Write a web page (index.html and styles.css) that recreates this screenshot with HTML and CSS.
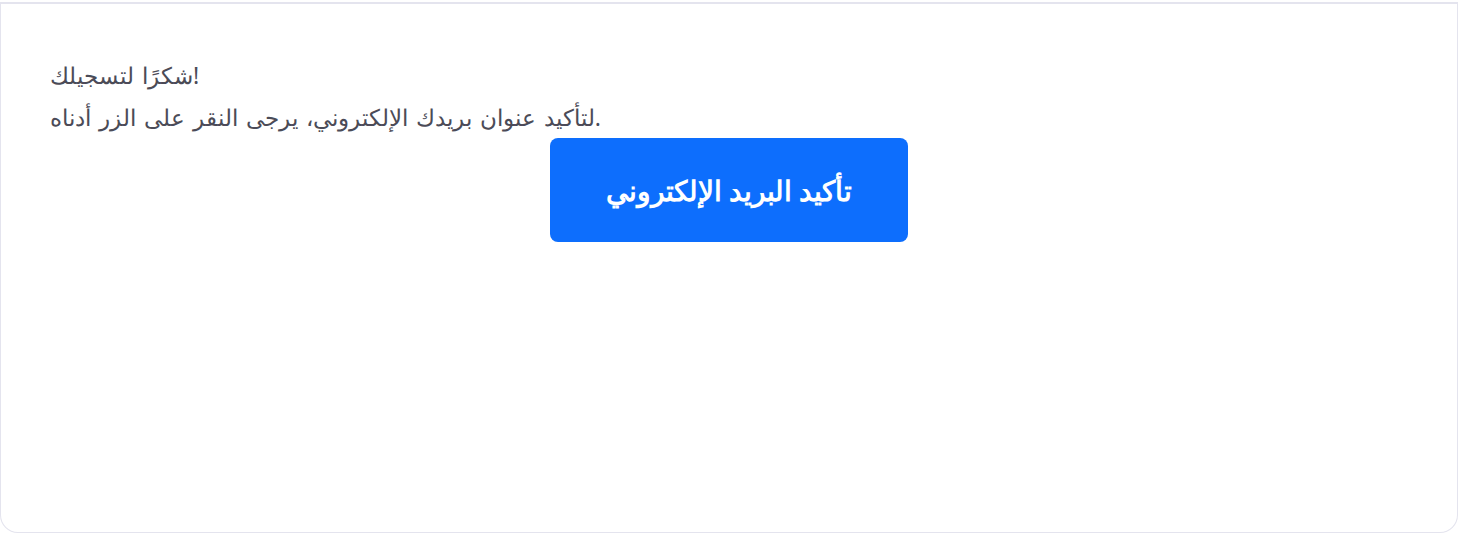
FILE: index.html
```html
<!DOCTYPE html>
<html lang="ar">
<head>
    <meta charset="UTF-8">
    <meta name="viewport" content="width=device-width, initial-scale=1.0">
    <title>تأكيد البريد الإلكتروني</title>
    <link rel="stylesheet" href="styles.css">
</head>
<body>
    <div class="card">
        <div class="message">
            <p>شكرًا لتسجيلك!</p>
            <p>لتأكيد عنوان بريدك الإلكتروني، يرجى النقر على الزر أدناه.</p>
        </div>
        <div class="actions">
            <a href="#" class="btn">تأكيد البريد الإلكتروني</a>
        </div>
    </div>
</body>
</html>
```

FILE: styles.css
```css
/* Reset */
body, p {
    margin: 0;
    padding: 0;
}

body {
    background-color: #fff;
    font-family: "Noto Sans", sans-serif;
    color: #4b4b57;
    padding-top: 2px;
    padding-right: 4px;
}

/* Card */
.card {
    height: 531px;
    box-sizing: border-box;
    border: 1px solid #e4e4ee;
    border-top-width: 2px;
    border-radius: 0 0 18px 18px;
    padding: 50px 49px 0;
}

.message p {
    font-size: 23px;
    line-height: 42px;
    word-spacing: 2px;
}

.actions {
    text-align: center;
}

/* Button */
.btn {
    display: inline-block;
    width: 358px;
    box-sizing: border-box;
    padding: 33px 0;
    background-color: #0d6efd;
    color: #fff;
    font-size: 28px;
    line-height: 38px;
    font-weight: 600;
    text-decoration: none;
    border-radius: 8px;
}
```
